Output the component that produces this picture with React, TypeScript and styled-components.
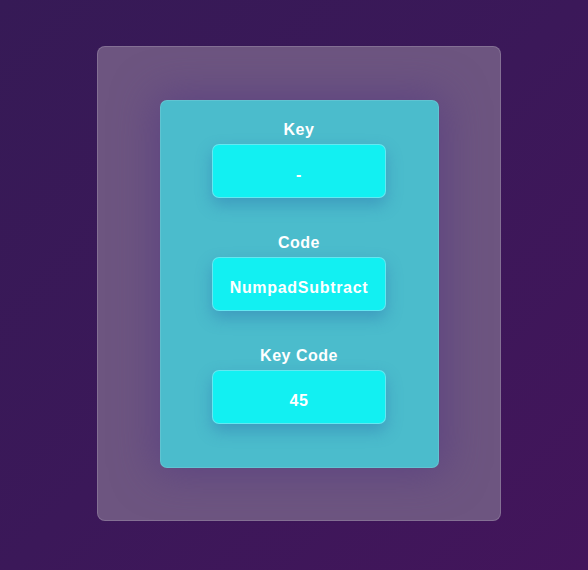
import React from "react";
import styled, { createGlobalStyle } from "styled-components";

const Global = createGlobalStyle`
  html, body { margin: 0; padding: 0; }
  body {
    width: 588px;
    height: 570px;
    overflow: hidden;
    background: linear-gradient(135deg, #361a56 0%, #3b1859 50%, #43155b 100%);
    font-family: "Liberation Sans", Arial, sans-serif;
  }
`;

const Page = styled.div`
  display: flex;
  justify-content: center;
  align-items: flex-start;
  padding: 46px 0 0 10px;
  box-sizing: border-box;
  height: 570px;
`;

const Outer = styled.div`
  width: 404px;
  height: 475px;
  box-sizing: border-box;
  border-radius: 8px;
  background: #6d5580;
  border: 1px solid rgba(255, 255, 255, 0.16);
  display: flex;
  align-items: center;
  justify-content: center;
`;

const Inner = styled.div`
  width: 279px;
  height: 368px;
  box-sizing: border-box;
  border-radius: 7px;
  background: #4bbccc;
  border: 1px solid rgba(255, 255, 255, 0.12);
  box-shadow: 0 0 40px 6px rgba(80, 55, 130, 0.55);
  padding: 20px 0 0;
  display: flex;
  flex-direction: column;
  align-items: center;
  gap: 36px;
`;

const Field = styled.div`
  display: flex;
  flex-direction: column;
  align-items: center;
  gap: 5px;
`;

const Label = styled.div`
  color: #ffffff;
  font-weight: 700;
  font-size: 16px;
  line-height: 18px;
  letter-spacing: 0.5px;
`;

const Value = styled.div`
  width: 174px;
  height: 54px;
  box-sizing: border-box;
  border-radius: 7px;
  background: #12f0f2;
  border: 1px solid rgba(120, 230, 240, 0.8);
  box-shadow: 0 7px 16px rgba(40, 105, 170, 0.4);
  display: flex;
  align-items: center;
  justify-content: center;
  padding-top: 8px;
  color: #ffffff;
  font-weight: 700;
  font-size: 16px;
  letter-spacing: 0.7px;
`;

const items = [
  { label: "Key", value: "-" },
  { label: "Code", value: "NumpadSubtract" },
  { label: "Key Code", value: "45" },
];

export default function App() {
  return (
    <>
      <Global />
      <Page>
        <Outer>
          <Inner>
            {items.map((it) => (
              <Field key={it.label}>
                <Label>{it.label}</Label>
                <Value>{it.value}</Value>
              </Field>
            ))}
          </Inner>
        </Outer>
      </Page>
    </>
  );
}
